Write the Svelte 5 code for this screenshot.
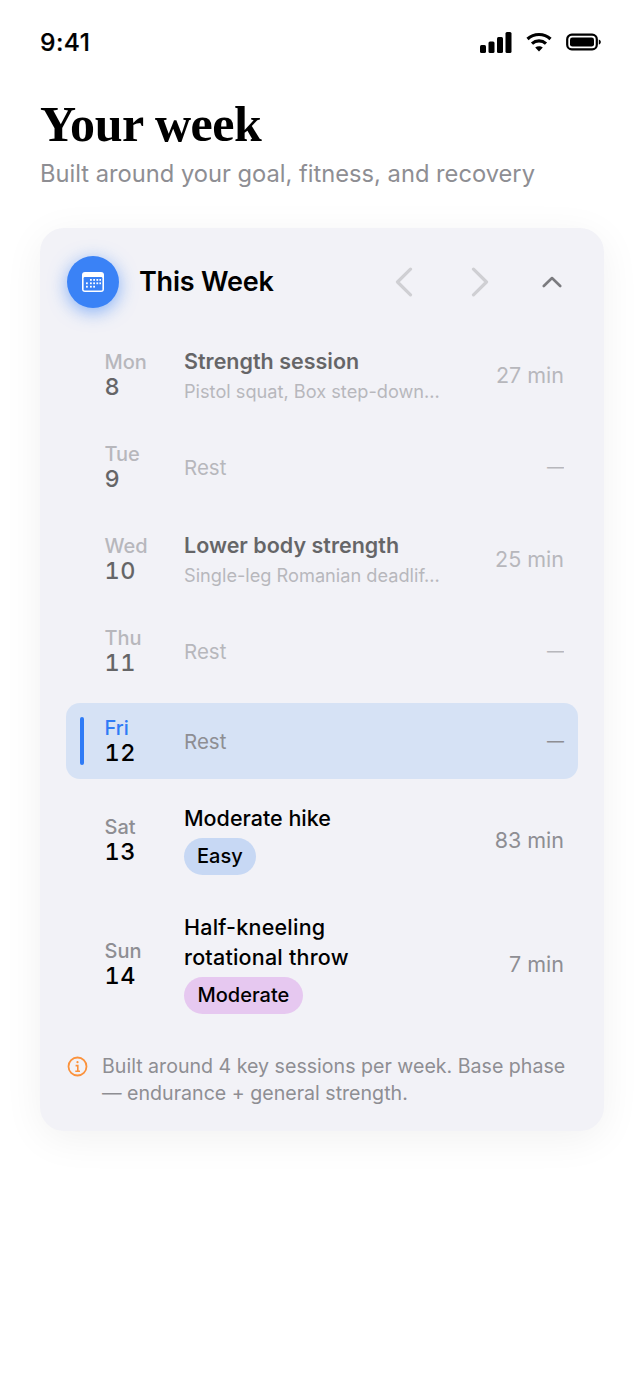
<script>
  const days = [
    { day: 'Mon', num: 8, title: 'Strength session', sub: 'Pistol squat, Box step-down...', time: '27 min', past: true, h: 'h82' },
    { day: 'Tue', num: 9, rest: true, past: true, h: 'h76' },
    { day: 'Wed', num: 10, title: 'Lower body strength', sub: 'Single-leg Romanian deadlif...', time: '25 min', past: true, h: 'h82' },
    { day: 'Thu', num: 11, rest: true, past: true, h: 'h76' },
    { day: 'Fri', num: 12, rest: true, today: true, h: 'h76' },
    { day: 'Sat', num: 13, title: 'Moderate hike', tag: 'Easy', tagClass: 'easy', time: '83 min', h: 'h98' },
    { day: 'Sun', num: 14, title: 'Half-kneeling\nrotational throw', tag: 'Moderate', tagClass: 'moderate', time: '7 min', h: 'h124' }
  ];
</script>

<div class="screen">
  <div class="status">
    <span class="clock">9:41</span>
    <div class="status-icons">
      <svg width="32" height="21" viewBox="0 0 32 21" fill="#000">
        <rect x="0" y="13" width="6" height="8" rx="1.5" />
        <rect x="8.5" y="9.5" width="6" height="11.5" rx="1.5" />
        <rect x="17" y="5" width="6" height="16" rx="1.5" />
        <rect x="25.5" y="0" width="6" height="21" rx="1.5" />
      </svg>
      <svg width="26" height="20" viewBox="0 0 26 20" fill="none" stroke="#000" stroke-width="3.2">
        <path d="M1.5 7 C8 1 18 1 24.5 7" />
        <path d="M6 11.6 C10 8 16 8 20 11.6" />
        <path d="M13 19.5 L9.2 15.6 C11.4 13.8 14.6 13.8 16.8 15.6 Z" fill="#000" stroke="none" />
      </svg>
      <svg width="35" height="18" viewBox="0 0 35 18" fill="none">
        <rect x="1.2" y="1.7" width="29.6" height="14.6" rx="4.6" stroke="#000" stroke-width="2.2" />
        <rect x="4" y="4.4" width="24" height="9.2" rx="2.4" fill="#000" />
        <path d="M32.8 6.4 C34.2 6.9 34.8 7.9 34.8 9 C34.8 10.1 34.2 11.1 32.8 11.6 Z" fill="#000" />
      </svg>
    </div>
  </div>

  <header class="intro">
    <h1>Your week</h1>
    <p>Built around your goal, fitness, and recovery</p>
  </header>

  <section class="card">
    <div class="card-head">
      <div class="badge">
        <svg width="22" height="20" viewBox="0 0 22 20">
          <rect x="0" y="0" width="22" height="20" rx="3" fill="#fff" />
          <rect x="1.6" y="5" width="18.8" height="13.4" rx="1.2" fill="#3a82f6" />
          <g fill="#fff">
            <rect x="8" y="7" width="1.8" height="1.8" /><rect x="11.2" y="7" width="1.8" height="1.8" /><rect x="14.4" y="7" width="1.8" height="1.8" /><rect x="17.4" y="7" width="1.6" height="1.8" />
            <rect x="4" y="10.4" width="1.8" height="1.8" /><rect x="8" y="10.4" width="1.8" height="1.8" /><rect x="11.2" y="10.4" width="1.8" height="1.8" /><rect x="14.4" y="10.4" width="1.8" height="1.8" /><rect x="17.4" y="10.4" width="1.6" height="1.8" />
            <rect x="4" y="13.8" width="1.8" height="1.8" /><rect x="8" y="13.8" width="1.8" height="1.8" /><rect x="11.2" y="13.8" width="1.8" height="1.8" />
          </g>
        </svg>
      </div>
      <h2>This Week</h2>
      <div class="controls">
        <svg class="nav-prev" width="18" height="30" viewBox="0 0 18 30" fill="none" stroke="#cfcfd3" stroke-width="3.2" stroke-linecap="round" stroke-linejoin="round">
          <path d="M15.5 2.2 L2.5 15 L15.5 27.8" />
        </svg>
        <svg class="nav-next" width="18" height="30" viewBox="0 0 18 30" fill="none" stroke="#cfcfd3" stroke-width="3.2" stroke-linecap="round" stroke-linejoin="round">
          <path d="M2.5 2.2 L15.5 15 L2.5 27.8" />
        </svg>
        <svg class="collapse" width="20" height="12" viewBox="0 0 20 12" fill="none" stroke="#7b7b7f" stroke-width="2.6" stroke-linecap="round" stroke-linejoin="round">
          <path d="M1.8 10 L10 2 L18.2 10" />
        </svg>
      </div>
    </div>

    <div class="list">
      {#each days as d}
        <div class="row {d.h}" class:past={d.past} class:today={d.today}>
          {#if d.today}<span class="marker"></span>{/if}
          <div class="date">
            <span class="dow">{d.day}</span>
            <span class="num">{d.num}</span>
          </div>
          <div class="body" class:lifted={d.tag}>
            {#if d.rest}
              <span class="rest">Rest</span>
            {:else}
              <span class="title" class:two-line={d.title.includes('\n')}>{d.title}</span>
              {#if d.sub}<span class="sub">{d.sub}</span>{/if}
              {#if d.tag}<span class="tag {d.tagClass}">{d.tag}</span>{/if}
            {/if}
          </div>
          <span class="time" class:dash={d.rest}>{d.rest ? '—' : d.time}</span>
        </div>
      {/each}
    </div>

    <div class="note">
      <svg width="21" height="21" viewBox="0 0 21 21" fill="none" stroke="#fb923c">
        <circle cx="10.5" cy="10.5" r="9" stroke-width="1.8" />
        <path d="M8.6 9.6 H10.8 V15 M8.3 15.2 H13" stroke-width="1.6" />
        <circle cx="10.5" cy="6.2" r="1.1" fill="#fb923c" stroke="none" />
      </svg>
      <p>Built around 4 key sessions per week. Base phase — endurance + general strength.</p>
    </div>
  </section>
</div>

<style>
  :global(body) {
    margin: 0;
    background: #fff;
  }

  .screen {
    width: 644px;
    height: 1400px;
    overflow: hidden;
    font-family: Inter, "Liberation Sans", sans-serif;
    color: #000;
  }

  .status {
    display: flex;
    align-items: center;
    justify-content: space-between;
    padding: 27px 43px 0 40px;
    height: 30px;
  }

  .clock {
    font-size: 24.6px;
    font-weight: 500;
    letter-spacing: 0.4px;
    line-height: 30px;
    -webkit-text-stroke: 0.2px #000;
  }

  .status-icons {
    display: flex;
    align-items: center;
    gap: 14px;
  }

  .intro {
    padding: 38px 40px 0;
  }

  h1 {
    margin: 0;
    font-family: "Liberation Serif", serif;
    font-size: 50px;
    font-weight: 700;
    line-height: 58px;
    letter-spacing: -0.45px;
  }

  .intro p {
    margin: 6px 0 0;
    font-size: 23.7px;
    line-height: 30px;
    color: #8e8e93;
  }

  .card {
    margin: 39px 40px 0;
    height: 903px;
    box-sizing: border-box;
    padding: 0 26px;
    background: #f2f2f7;
    border-radius: 24px;
    box-shadow: 0 8px 40px rgba(0, 0, 0, 0.06);
  }

  .card-head {
    box-sizing: border-box;
    display: flex;
    align-items: center;
    height: 106px;
    padding-top: 1px;
  }

  .badge {
    width: 52px;
    height: 52px;
    margin-left: 1px;
    border-radius: 50%;
    background: #3a82f6;
    display: flex;
    align-items: center;
    justify-content: center;
    box-shadow: 0 4px 18px rgba(58, 130, 246, 0.6);
  }

  h2 {
    margin: 0 0 0 20px;
    font-size: 27px;
    font-weight: 600;
    letter-spacing: -0.2px;
  }

  .controls {
    margin-left: auto;
    display: flex;
    align-items: center;
  }

  .nav-next {
    margin-left: 58px;
  }

  .collapse {
    margin: 0 16px 0 53px;
  }

  .list {
    display: flex;
    flex-direction: column;
    gap: 13px;
  }

  .row {
    position: relative;
    display: flex;
    align-items: center;
    padding: 0 14px 0 38.5px;
    border-radius: 14px;
  }

  .h76 { height: 76px; }
  .h82 { height: 82px; }
  .h98 { height: 98px; }
  .h124 { height: 124px; }

  .past {
    opacity: 0.58;
  }

  .today {
    margin: 1px 0 -1px;
    background: #d6e2f5;
  }

  .marker {
    position: absolute;
    left: 14px;
    top: 14px;
    width: 4px;
    height: 48px;
    border-radius: 2px;
    background: #2f7bf6;
  }

  .date {
    width: 79.5px;
    flex: none;
    display: flex;
    flex-direction: column;
  }

  .dow {
    font-size: 20px;
    line-height: 24px;
    font-weight: 500;
    color: #8e8e93;
  }

  .today .dow {
    color: #2f7bf6;
  }

  .num {
    font-size: 23.5px;
    line-height: 26px;
    font-weight: 500;
    letter-spacing: 0.5px;
    font-variant-numeric: tabular-nums;
    color: #000;
  }

  .body {
    flex: 1;
    min-width: 0;
    display: flex;
    flex-direction: column;
    align-items: flex-start;
  }

  .body.lifted {
    padding-bottom: 2px;
  }

  .title {
    font-size: 21.5px;
    line-height: 30px;
    font-weight: 500;
    white-space: pre-line;
  }

  .title.two-line {
    letter-spacing: 0.22px;
  }

  .past .title {
    font-weight: 600;
  }

  .sub {
    margin-top: 2px;
    font-size: 18.2px;
    line-height: 26px;
    color: #8e8e93;
  }

  .rest {
    font-size: 20.5px;
    color: #8e8e93;
  }

  .tag {
    margin-top: 5px;
    padding: 0 13.5px;
    height: 37px;
    line-height: 37px;
    border-radius: 19px;
    font-size: 20px;
    font-weight: 500;
  }

  .easy {
    padding: 0 13px;
    background: #c7d8f4;
  }

  .moderate {
    background: #e6c8f0;
  }

  .time {
    font-size: 21.5px;
    color: #8e8e93;
  }

  .time.dash {
    font-size: 17px;
  }

  .note {
    display: flex;
    align-items: flex-start;
    gap: 14px;
    margin: 27px 0 0 1px;
  }

  .note svg {
    flex: none;
    margin-top: 3px;
  }

  .note p {
    margin: 0;
    font-size: 19.6px;
    line-height: 27px;
    color: #8e8e93;
  }
</style>
